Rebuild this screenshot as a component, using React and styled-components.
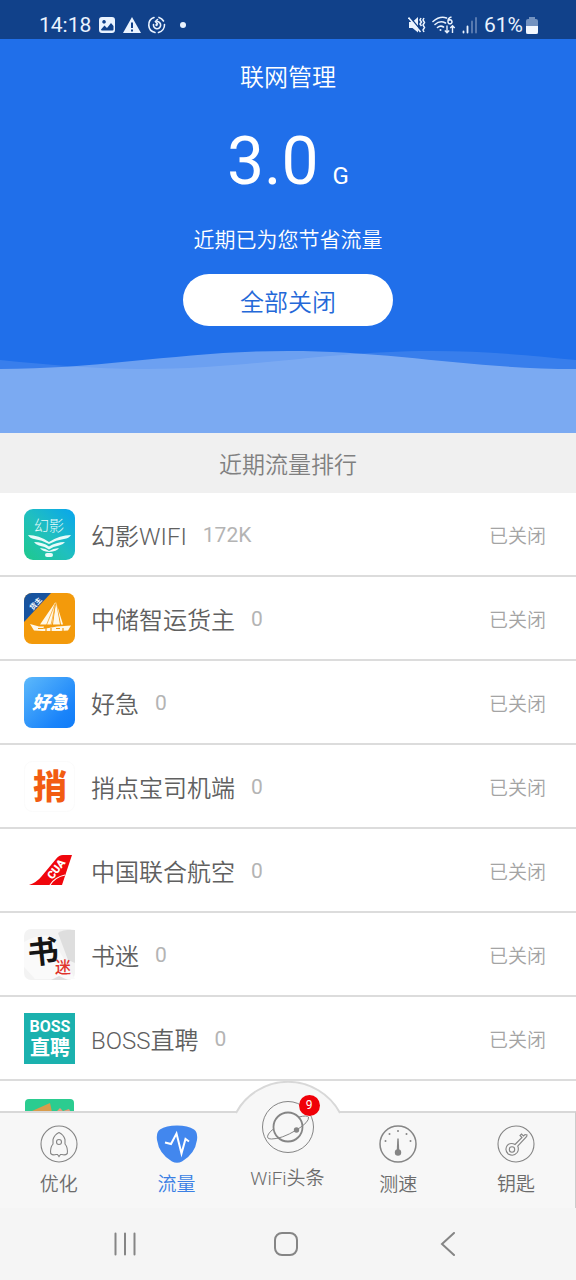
import React, { useState } from 'react';
import styled, { createGlobalStyle } from 'styled-components';

const GlobalStyle = createGlobalStyle`
  * {
    box-sizing: border-box;
  }

  body {
    margin: 0;
    background: #ffffff;
    font-family: Roboto, 'Noto Sans CJK SC', sans-serif;
    font-weight: 350;
  }

  button {
    padding: 0;
    border: none;
    background: none;
    font-family: inherit;
    font-weight: inherit;
    cursor: pointer;
  }

  svg {
    display: block;
  }
`;

const CJK = "'Noto Sans CJK SC', sans-serif";

/* ---------- status bar ---------- */

const StatusIcons = () => (
  <svg width="92" height="20" viewBox="0 0 92 20" fill="#eaf3ff">
    <path
      fillRule="evenodd"
      d="M3 2h10q3 0 3 3v10q0 3-3 3H3q-3 0-3-3V5q0-3 3-3zM2 14.500l3.500-4 2.500 2.500 4-5 2.500 3v3.500q0 1-1 1H3q-1 0-1-1zM5 5a1.800 1.800 0 1 0 .1 0z"
    />
    <path fillRule="evenodd" d="M33 2l9 16H24zM32 7.500h2v5.500h-2zM32 14.500h2v2h-2z" />
    <g fill="none" stroke="#eaf3ff" strokeWidth="1.600" strokeLinecap="round">
      <path d="M55 2.500A7.800 7.800 0 0 0 56 17.500M60 2.400A7.800 7.800 0 0 1 64.500 6M65.500 9.500A7.800 7.800 0 0 1 59.500 17.500" />
      <path d="M54.500 9.500a3.600 3.600 0 1 0 3.500-3" />
      <path d="M58.500 4.500l-2 2 2 2.500" />
    </g>
    <circle cx="57.500" cy="10" r="1.200" />
    <circle cx="84" cy="10" r="3" />
  </svg>
);

const MuteIcon = () => (
  <svg width="18" height="18" viewBox="0 0 18 18" fill="#eaf3ff">
    <path d="M1 6h3.500L10 1v15.500L4.500 12H1z" />
    <path d="M1 0L13 14.500" stroke="#11418a" strokeWidth="1.500" />
    <path d="M.5 1.500L12.500 16" stroke="#eaf3ff" strokeWidth="1.600" />
    <path
      d="M13 2l-1 2 1.500 2-1.500 2 1.500 2M16 2l-1 2 1.500 2.500-1.500 2.500 1.500 2.500-1.500 2.500 1 2"
      fill="none"
      stroke="#eaf3ff"
      strokeWidth="1.500"
    />
  </svg>
);

const WifiIcon = () => (
  <svg width="24" height="20" viewBox="0 0 24 20" fill="none" stroke="#eaf3ff" strokeWidth="1.600">
    <path d="M1 6.500Q8 .5 14.500 3M3 9.500Q8 5 13.500 8M5.500 12.500Q8.500 10 11.500 12" strokeLinecap="round" />
    <path d="M19.500 2Q15.500 3 16 7a2 2 0 1 0 .5-1.500" strokeWidth="1.500" />
    <circle cx="8.500" cy="15" r="1" fill="#eaf3ff" stroke="none" />
    <path d="M15 10.500v7M12.800 15.500l2.200 2.300 2.200-2.300M20.500 18v-7M18.300 13l2.200-2.300 2.200 2.300" strokeWidth="1.400" />
  </svg>
);

const SignalIcon = () => (
  <svg width="16" height="18" viewBox="0 0 16 18" strokeWidth="1.800" strokeLinecap="round">
    <path d="M1.500 15.500v1M5.500 10.500v6" stroke="#eaf3ff" />
    <path d="M10 5.500v11M14 2v14.500" stroke="#6080b4" />
  </svg>
);

const BatteryIcon = () => (
  <svg width="12" height="18" viewBox="0 0 12 18">
    <path d="M3 1h6v2h1q2 0 2 2v12q0 1-1 1H1q-1 0-1-1V5q0-2 2-2h1z" fill="#7392c0" />
    <path d="M0 10h12v6q0 2-2 2H2q-2 0-2-2z" fill="#f4f8ff" />
  </svg>
);

/* ---------- app logos ---------- */

const LogoHuanying = () => (
  <svg viewBox="0 0 51 51">
    <defs>
      <linearGradient id="hy" x1="0" y1="1" x2="1" y2="0">
        <stop offset="0" stopColor="#1fc98c" />
        <stop offset="0.500" stopColor="#20bfc0" />
        <stop offset="1" stopColor="#08a5ee" />
      </linearGradient>
    </defs>
    <rect width="51" height="51" rx="9" fill="url(#hy)" />
    <text x="25" y="22" textAnchor="middle" fontSize="15" fontWeight="300" fontFamily={CJK} fill="#e8fbfa">
      幻影
    </text>
    <g fill="#e8fbfa">
      <path d="M4 26Q15 26 25 33 36 26 47 26 45 29.500 40 30 32 31 25 35 18 31 10 30 6 29.500 4 26z" />
      <path d="M10 33Q19 33 25 37.500 32 33 41 33 39 36 35 36.500 29 37.500 25 40.500 21 37.500 15 36.500 12 36 10 33z" />
      <path d="M16 39Q22 39.500 25 42 29 39.500 35 39 33 42.500 25 43 18 42.500 16 39z" />
      <rect x="21" y="44" width="8" height="4" rx="2" />
    </g>
  </svg>
);

const LogoZhongchu = () => (
  <svg viewBox="0 0 51 51">
    <defs>
      <clipPath id="zc">
        <rect width="51" height="51" rx="8" />
      </clipPath>
    </defs>
    <g clipPath="url(#zc)">
      <rect width="51" height="51" fill="#f39a0b" />
      <path d="M0 0h27L0 29z" fill="#17539f" />
      <text x="12" y="13" textAnchor="middle" fontSize="7" fontWeight="700" fontFamily={CJK} fill="#fff" transform="rotate(-47 12 11)">
        货主
      </text>
    </g>
    <g fill="#fff8e8">
      <path d="M31.500 9L16 31.500h12z" />
      <path d="M32 9l-3 22.500h7z" />
      <path d="M33 12l4 19.500h2z" />
      <path d="M6 31l9 2.500h5L19 36l14-2.500 14-1-3 5q-17 1-34 0z" />
    </g>
    <path d="M31 11l-8.500 21M31.500 11l-4.500 21" stroke="#f39a0b" strokeWidth="0.700" />
    <path d="M14 35.500h5M22 38v-3M27 38v-3M32 35.500h4M39 38v-3" stroke="#f39a0b" strokeWidth="1.200" fill="none" />
  </svg>
);

const LogoHaoji = () => (
  <svg viewBox="0 0 51 51">
    <defs>
      <linearGradient id="hj" x1="0" y1="0" x2="1" y2="1">
        <stop offset="0" stopColor="#5db9fb" />
        <stop offset="0.750" stopColor="#1a84fa" />
        <stop offset="1" stopColor="#0f7bf8" />
      </linearGradient>
    </defs>
    <rect width="51" height="51" rx="8" fill="url(#hj)" />
    <text
      x="26"
      y="32"
      textAnchor="middle"
      fontSize="18"
      fontWeight="900"
      fontStyle="italic"
      fontFamily={CJK}
      fill="#fff"
    >
      好急
    </text>
  </svg>
);

const LogoShao = () => (
  <svg viewBox="0 0 51 51">
    <rect x="0.500" y="0.500" width="50" height="50" rx="8" fill="#fff" stroke="#fbfbfb" />
    <text
      x="26"
      y="38"
      textAnchor="middle"
      fontSize="34"
      fontWeight="900"
      fontFamily={CJK}
      fill="#f25c12"
    >
      捎
    </text>
  </svg>
);

const LogoCua = () => (
  <svg viewBox="0 0 51 51">
    <path d="M5 40Q13 37 17 32L32 14Q35 10 39 10H48L38 40z" fill="#f0060c" />
    <path d="M26 40q5-8 15-10" fill="none" stroke="#fff" strokeWidth="1.200" />
    <text
      x="32"
      y="28"
      textAnchor="middle"
      fontSize="11"
      fontWeight="900"
      fontFamily="Roboto, sans-serif"
      fill="#fff"
      transform="rotate(-52 32 24)"
    >
      CUA
    </text>
  </svg>
);

const LogoShumi = () => (
  <svg viewBox="0 0 51 51">
    <rect width="51" height="51" rx="7" fill="#f3f3f3" />
    <path d="M34 4Q40 0 51 1v33L44 31z" fill="#dedede" />
    <path d="M0 13Q14 5 27 7l24 43H11L0 38z" fill="#fafafa" />
    <path d="M27 51l8-4 9 4z" fill="#dfdfdf" />
    <text x="19" y="34" textAnchor="middle" fontSize="31" fontWeight="700" fontFamily={CJK} fill="#151515" transform="rotate(-6 19 24)">
      书
    </text>
    <text x="39" y="44" textAnchor="middle" fontSize="16" fontWeight="500" fontFamily={CJK} fill="#e0342c">
      迷
    </text>
  </svg>
);

const LogoBoss = () => (
  <svg viewBox="0 0 51 51">
    <rect width="51" height="51" fill="#1bb1ae" />
    <g fill="#fff" textAnchor="middle" fontWeight="700">
      <text x="26" y="19" fontSize="16" fontFamily="Roboto, sans-serif">BOSS</text>
      <text x="26" y="42" fontSize="20" fontFamily={CJK}>直聘</text>
    </g>
  </svg>
);

const LogoGreen = () => (
  <svg viewBox="0 0 51 51">
    <rect x="1" y="2" width="49" height="48" rx="4" fill="#2bcc90" />
    <path d="M8 14l18-8 2 9H6z" fill="#d99c4c" />
    <path d="M33 14l3-3 3 3 6-2 3 5H32z" fill="#e59f7c" />
  </svg>
);

/* ---------- tab icons ---------- */

const RocketIcon = () => (
  <svg width="38" height="38" viewBox="0 0 38 38" fill="none" stroke="#858585" strokeWidth="1.100">
    <circle cx="19" cy="19" r="18" />
    <path d="M13 19V14.500q1.500-5 6-7 4.500 2 6 7V19q3 3.500 2.300 9.500-2 2-5.300 1h-1.500l-1.500 2-1.500-2H16q-3.300 1-5.300-1Q10 22.500 13 19z" />
    <circle cx="19" cy="17" r="2.500" />
  </svg>
);

const PulseIcon = () => (
  <svg width="42" height="38" viewBox="0 0 42 38">
    <path d="M21 .5Q32 .5 38 4.500 42 7 41 15 39 29 26 36.500 21 39 16 36.500 3 29 1 15 0 7 4 4.500 10 .5 21 .5z" fill="#4287ee" />
    <path d="M9 17.500l6 1.500 5.500-10.500 5 20 4-14.500 3.500 2.500" fill="none" stroke="#fff" strokeWidth="2" />
  </svg>
);

const PlanetIcon = () => (
  <svg width="52" height="52" viewBox="0 0 52 52" fill="none" stroke="#858585">
    <circle cx="26" cy="26" r="25.500" strokeWidth="1" />
    <circle cx="26" cy="26" r="14.500" strokeWidth="1.800" />
    <path d="M37 16q8-2 9.500 0 1 5-12 13-15 9-25 9-6 0-3-5 2-3 5-5" strokeWidth="1" />
    <circle cx="34.500" cy="29" r="2.700" fill="#858585" stroke="none" />
  </svg>
);

const GaugeIcon = () => (
  <svg width="38" height="38" viewBox="0 0 38 38" fill="#858585">
    <circle cx="19" cy="19" r="18" fill="none" stroke="#858585" strokeWidth="1.500" />
    <path d="M18.300 13.500h1.400l.6 13h-2.600z" />
    <circle cx="19" cy="27.500" r="3.200" />
    <circle cx="19" cy="6" r="1" />
    <circle cx="10.500" cy="9" r="1" />
    <circle cx="27.500" cy="9" r="1" />
    <circle cx="6.500" cy="16" r="1" />
    <circle cx="31.500" cy="16" r="1" />
  </svg>
);

const KeyIcon = () => (
  <svg width="38" height="38" viewBox="0 0 38 38" fill="none" stroke="#858585" strokeWidth="1.100">
    <circle cx="19" cy="19" r="18" />
    <path d="M18 19.500l7-7-2-2 1.500-1.500 2 2 1.500-1.500 2 .5-.3 1.500-9 9.500q1.500 3.500-.5 6.500-3.500 4.500-9 1.500-4-4-1-8.500 3.500-3.500 7.800-1z" />
    <circle cx="15" cy="24.500" r="2.700" />
  </svg>
);

/* ---------- data ---------- */

const apps = [
  { name: '幻影WIFI', usage: '172K', Logo: LogoHuanying },
  { name: '中储智运货主', usage: '0', Logo: LogoZhongchu },
  { name: '好急', usage: '0', Logo: LogoHaoji },
  { name: '捎点宝司机端', usage: '0', Logo: LogoShao },
  { name: '中国联合航空', usage: '0', Logo: LogoCua },
  { name: '书迷', usage: '0', Logo: LogoShumi },
  { name: 'BOSS直聘', usage: '0', Logo: LogoBoss },
  { name: '', usage: '', Logo: LogoGreen },
];

const tabs = [
  { id: 'boost', label: '优化', Icon: RocketIcon },
  { id: 'traffic', label: '流量', Icon: PulseIcon },
  { id: 'news', label: 'WiFi头条', Icon: PlanetIcon, badge: 9, raised: true },
  { id: 'speed', label: '测速', Icon: GaugeIcon },
  { id: 'key', label: '钥匙', Icon: KeyIcon },
];

const App = () => {
  const [active, setActive] = useState('traffic');

  return (
    <Screen>
      <GlobalStyle />
      <StatusBar>
        <StatusGroup $gap={8}>
          <span>14:18</span>
          <StatusIcons />
        </StatusGroup>
        <StatusGroup $gap={6}>
          <MuteIcon />
          <WifiIcon />
          <SignalIcon />
          <Battery>
            61%
            <BatteryIcon />
          </Battery>
        </StatusGroup>
      </StatusBar>

      <Hero>
        <Title>联网管理</Title>
        <Saved>
          <Amount>3.0</Amount>
          <Unit>G</Unit>
        </Saved>
        <Caption>近期已为您节省流量</Caption>
        <CloseAll type="button">全部关闭</CloseAll>
        <Waves viewBox="0 0 576 83" preserveAspectRatio="none" fill="#ffffff">
          <path fillOpacity="0.110" d="M-144 1C-39 1 39 19 144 19S327 1 432 1 615 19 720 19V83H-144z" />
          <path fillOpacity="0.340" d="M0 19C105 19 183 1 288 1S471 19 576 19V83H0z" />
        </Waves>
      </Hero>

      <SectionTitle>近期流量排行</SectionTitle>

      <AppList>
        {apps.map(({ name, usage, Logo }, i) => (
          <AppRow key={i}>
            <LogoBox>
              <Logo />
            </LogoBox>
            {name && (
              <>
                <AppInfo>
                  <AppName>{name}</AppName>
                  <Usage>{usage}</Usage>
                </AppInfo>
                <StateButton type="button">已关闭</StateButton>
              </>
            )}
          </AppRow>
        ))}
      </AppList>

      <TabBar>
        {tabs.map(({ id, label, Icon, badge, raised }) => (
          <Tab
            key={id}
            type="button"
            $active={id === active}
            $raised={raised}
            onClick={() => setActive(id)}
          >
            {raised && (
              <Bump viewBox="0 0 104 34">
                <path d="M0 34v-2.500A59 59 0 0 1 104 31.500V34z" fill="#f7f7f7" />
                <path d="M0 32A59 59 0 0 1 104 32" fill="none" stroke="#d8d8d8" strokeWidth="2" />
              </Bump>
            )}
            <TabIcon>
              <Icon />
              {badge && <Badge>{badge}</Badge>}
            </TabIcon>
            <TabLabel>{label}</TabLabel>
          </Tab>
        ))}
      </TabBar>

      <SystemNav>
        <NavButton type="button" aria-label="recents">
          <svg width="24" height="24" viewBox="0 0 24 24" stroke="#858585" strokeWidth="2" strokeLinecap="round">
            <path d="M2.500 1.500v21M12 1.500v21M21.500 1.500v21" />
          </svg>
        </NavButton>
        <NavButton type="button" aria-label="home">
          <svg width="24" height="24" viewBox="0 0 24 24" fill="none" stroke="#858585" strokeWidth="2">
            <rect x="1" y="1" width="22" height="22" rx="7" />
          </svg>
        </NavButton>
        <NavButton type="button" aria-label="back">
          <svg width="24" height="24" viewBox="0 0 24 24" fill="none" stroke="#858585" strokeWidth="2" strokeLinecap="round">
            <path d="M19 1L7 12l12 11" />
          </svg>
        </NavButton>
      </SystemNav>
    </Screen>
  );
};

const Screen = styled.div`
  display: flex;
  flex-direction: column;
  height: 100vh;
  overflow: hidden;
`;

const StatusBar = styled.div`
  flex: none;
  display: flex;
  justify-content: space-between;
  height: 39px;
  padding: 10px 38px 0 39px;
  background: #11418a;
  color: #eaf3ff;
  font-size: 21px;
  font-weight: 400;
  line-height: 28px;
`;

const StatusGroup = styled.div`
  display: flex;
  align-items: center;
  gap: ${({ $gap }) => $gap}px;
`;

const Battery = styled.span`
  display: flex;
  align-items: center;
  gap: 3px;
`;

const Hero = styled.header`
  flex: none;
  display: flex;
  flex-direction: column;
  align-items: center;
  padding-top: 21px;
  background: #206fea;
  color: #ffffff;
`;

const Title = styled.h1`
  margin: 0;
  font-size: 24px;
  font-weight: inherit;
  line-height: 36px;
`;

const Saved = styled.div`
  display: flex;
  align-items: baseline;
  gap: 14px;
  margin-top: 26px;
  font-weight: 400;
  line-height: 80px;
`;

const Amount = styled.span`
  font-size: 66px;
`;

const Unit = styled.span`
  font-size: 24px;
`;

const Caption = styled.p`
  margin: 8px 0 0;
  font-size: 21px;
  line-height: 32px;
`;

const CloseAll = styled.button`
  width: 210px;
  height: 52px;
  margin-top: 18px;
  border-radius: 26px;
  background: #ffffff;
  color: #2468d8;
  font-size: 24px;
`;

const Waves = styled.svg`
  width: 100%;
  height: 83px;
  margin-top: 24px;
`;

const SectionTitle = styled.h2`
  flex: none;
  display: flex;
  align-items: center;
  justify-content: center;
  height: 60px;
  margin: 0;
  background: #f0f0f0;
  color: #808080;
  font-size: 23px;
  font-weight: inherit;
`;

const AppList = styled.ul`
  flex: 1;
  min-height: 0;
  margin: 0;
  padding: 0;
  overflow: hidden;
  list-style: none;
  background: #ffffff;
`;

const AppRow = styled.li`
  display: flex;
  align-items: center;
  justify-content: space-between;
  gap: 16px;
  height: 84px;
  padding: 0 30px 0 24px;
  border-bottom: 2px solid #dcdcdc;
`;

const LogoBox = styled.div`
  flex: none;
  width: 51px;
  height: 51px;

  svg {
    overflow: visible;
  }
`;

const AppInfo = styled.div`
  flex: 1;
  display: flex;
  align-items: center;
  gap: 16px;
`;

const AppName = styled.span`
  color: #606060;
  font-size: 24px;
`;

const Usage = styled.span`
  padding-top: 2px;
  color: #b4b4b4;
  font-size: 21px;
  font-weight: 400;
`;

const StateButton = styled.button`
  color: #a4a4a4;
  font-size: 19px;
`;

const TabBar = styled.nav`
  position: relative;
  flex: none;
  display: grid;
  grid-template-columns: 1fr 1fr 104px 1fr 1fr;
  height: 97px;
  border-top: 2px solid #d8d8d8;
  border-right: 1px solid #cccccc;
  background: #f7f7f7;
`;

const Tab = styled.button`
  position: relative;
  display: flex;
  flex-direction: column;
  align-items: center;
  gap: ${({ $raised }) => ($raised ? 12 : 8)}px;
  margin-top: ${({ $raised }) => ($raised ? -32 : 0)}px;
  padding-top: ${({ $raised }) => ($raised ? 20 : 12)}px;
  color: ${({ $active }) => ($active ? '#3a7fe4' : '#6c6c6c')};
`;

/* the half circle that rises over the top edge of the bar */
const Bump = styled.svg`
  position: absolute;
  top: 0;
  left: 0;
  width: 100%;
  height: 34px;
`;

const TabIcon = styled.span`
  position: relative;
`;

const Badge = styled.span`
  position: absolute;
  top: -6px;
  right: -6px;
  width: 21px;
  height: 21px;
  border-radius: 50%;
  background: #f00008;
  color: #ffffff;
  font-size: 12px;
  font-weight: 400;
  line-height: 21px;
  text-align: center;
`;

const TabLabel = styled.span`
  font-size: 19px;
  line-height: 28px;
`;

const SystemNav = styled.div`
  flex: none;
  display: flex;
  justify-content: space-around;
  height: 72px;
  padding: 0 48px 0 44px;
  background: #f5f5f5;
`;

const NavButton = styled.button`
  display: flex;
  align-items: center;
  justify-content: center;
  width: 72px;
`;

export default App;
